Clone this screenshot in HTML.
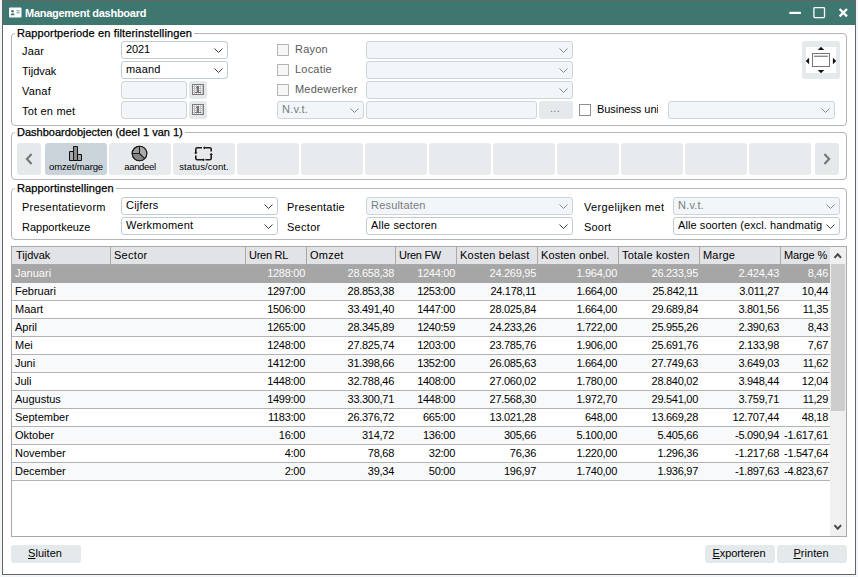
<!DOCTYPE html>
<html lang="nl"><head><meta charset="utf-8"><title>Management dashboard</title>
<style>
html,body{margin:0;padding:0}
body{width:858px;height:577px;overflow:hidden;background:#f2f6f8;position:relative;
 font-family:"Liberation Sans",Arial,sans-serif;font-size:11px;color:#000;letter-spacing:0.2px}
div,span{box-sizing:border-box}
#win{position:absolute;left:2px;top:0;width:854px;height:575px;border:1px solid #646464;background:#fff}
#tb{position:absolute;left:3px;top:1px;width:852px;height:24px;background:#3e7770}
#tt{position:absolute;left:25px;top:1px;height:24px;line-height:25px;color:#fff;font-weight:bold;font-size:11px;letter-spacing:-0.27px;white-space:nowrap}
.gb{position:absolute;border:1px solid #b4b4b4;border-radius:4px}
.gt{position:absolute;background:#fff;padding:0 2px 0 2px;white-space:nowrap;line-height:12px;height:12px;letter-spacing:0.14px;color:#000;-webkit-text-stroke:0.25px #000}
.lb{position:absolute;white-space:nowrap;line-height:16px;height:16px}
.lb.g{color:#5a5a5a}
.cb{position:absolute;border:1px solid #c2cbd2;border-radius:3px;background:#fff;white-space:nowrap;overflow:hidden}
.cb span{position:absolute;left:4px;right:17px;top:-1px;line-height:16px;height:17px;overflow:hidden}
.cb.dis{background:#f3f6f8;border-color:#cdd5db;color:#777c80}
.cb .chev{position:absolute;right:4px;top:6px}
.in{position:absolute;border:1px solid #cdd5db;border-radius:3px;background:#f3f6f8}
.bt{position:absolute;background:#e4e9ec;border-radius:3px;text-align:center;white-space:nowrap;padding-right:2px}
.ck{position:absolute;width:12px;height:12px;border:1px solid #8e8e8e;background:#fff}
.ck.dis{border-color:#b5b5b5;background:#f4f6f7}
.db{position:absolute;top:143px;width:62px;height:32px;background:#e7ebee;border-radius:3px}
.db.sel{background:#ccd4db}
.db i{position:absolute;left:0;top:18px;width:62px;text-align:center;font-style:normal;font-size:9.5px;line-height:11px;letter-spacing:-0.14px;color:#000}
.db svg{position:absolute}
#tbl{position:absolute;left:11px;top:246px;width:836px;height:291px;border:1px solid #a9a9a9;background:#fff;overflow:hidden}
#hd{position:absolute;left:0;top:0;width:818px;height:18px;background:#e2e3e7;border-bottom:1px solid #a9a9a9}
.hc{position:absolute;top:0;height:17px;line-height:17px;white-space:nowrap}
.vs{position:absolute;top:0;width:1px;height:17px;background:#a9a9a9}
.rw{position:absolute;left:0;width:818px;height:18px;border-bottom:1px solid #b3b3b3;background:#fff}
.rw.alt{background:#f8f9fa}
.rw.sel{background:#a6a6a6;border-bottom-color:#a6a6a6;color:#fbfbfb}
.rw span{position:absolute;top:0;height:17px;line-height:17px;white-space:nowrap}
.rw span.n{text-align:right;letter-spacing:-0.28px}
#sb{position:absolute;left:818px;top:0;width:16px;height:289px;background:#f0f0f0}
#th{position:absolute;left:1px;top:17px;width:14px;height:147px;background:#cdcdcd}
u{text-decoration:underline;text-underline-offset:1px}
</style></head><body>
<svg width="0" height="0" style="position:absolute"><defs><pattern id="dots" x="1" y="1" width="2" height="2" patternUnits="userSpaceOnUse"><rect width="2" height="2" fill="#c4c4c4"/><rect width="1" height="1" fill="#fff"/></pattern></defs></svg>
<div id="win"></div>
<div id="tb"></div>
<svg style="position:absolute;left:9px;top:7px" width="13" height="11" viewBox="0 0 13 11"><rect x="0" y="0.5" width="12.5" height="10" rx="1.2" fill="#fff"/><circle cx="3.6" cy="4.2" r="1.3" fill="#3e7770"/><path d="M1.6 8.2 Q1.6 6.2 3.6 6.2 Q5.6 6.2 5.6 8.2 Z" fill="#3e7770"/><rect x="7.4" y="3.3" width="3.4" height="1.1" fill="#7aa5a0"/><rect x="7.4" y="5.3" width="3.4" height="1.1" fill="#7aa5a0"/></svg>
<div id="tt">Management dashboard</div>
<svg style="position:absolute;left:786px;top:5px" width="66" height="16" viewBox="0 0 66 16"><rect x="3.3" y="6.8" width="11.6" height="2.2" fill="#fff"/><rect x="27.9" y="2.6" width="10.6" height="10" rx="0.8" fill="none" stroke="#fff" stroke-width="1.3"/><path d="M53.6 4 L61 11.4 M61 4 L53.6 11.4" stroke="#fff" stroke-width="2.3" fill="none"/></svg>
<div class="gb" style="left:11px;top:33px;width:836px;height:93px"></div>
<div class="gt" style="left:15px;top:27px">Rapportperiode en filterinstellingen</div>
<div class="lb" style="left:22px;top:43px">Jaar</div>
<div class="lb" style="left:22px;top:63px;letter-spacing:-0.02px">Tijdvak</div>
<div class="lb" style="left:22px;top:83px">Vanaf</div>
<div class="lb" style="left:22px;top:103px">Tot en met</div>
<div class="cb" style="left:121px;top:41px;width:107px;height:18px"><span style="letter-spacing:-0.15px">2021</span><svg class="chev" width="9" height="6" viewBox="0 0 9 6"><path d="M0.5 0.5 L4.5 4.5 L8.5 0.5" fill="none" stroke="#3c3c3c" stroke-width="1"/></svg></div>
<div class="cb" style="left:121px;top:61px;width:107px;height:18px"><span style="">maand</span><svg class="chev" width="9" height="6" viewBox="0 0 9 6"><path d="M0.5 0.5 L4.5 4.5 L8.5 0.5" fill="none" stroke="#3c3c3c" stroke-width="1"/></svg></div>
<div class="in" style="left:121px;top:81px;width:66px;height:18px"></div>
<div class="bt" style="left:189px;top:81px;width:18px;height:18px"><svg style="position:absolute;left:3px;top:3px" width="12" height="11" viewBox="0 0 12 11"><rect x="0.5" y="0.5" width="11" height="10" fill="url(#dots)" stroke="#7c7c7c"/><path d="M5 2 H7 V8 H9 V9 H3 V8 H5 V4 H4 V3 H5 Z" fill="#757575"/></svg></div>
<div class="in" style="left:121px;top:101px;width:66px;height:18px"></div>
<div class="bt" style="left:189px;top:101px;width:18px;height:18px"><svg style="position:absolute;left:3px;top:3px" width="12" height="11" viewBox="0 0 12 11"><rect x="0.5" y="0.5" width="11" height="10" fill="url(#dots)" stroke="#7c7c7c"/><path d="M5 2 H7 V8 H9 V9 H3 V8 H5 V4 H4 V3 H5 Z" fill="#757575"/></svg></div>
<div class="ck dis" style="left:277px;top:44px"></div>
<div class="lb g" style="left:295px;top:41px">Rayon</div>
<div class="cb dis" style="left:366px;top:41px;width:207px;height:18px"><span style=""></span><svg class="chev" width="9" height="6" viewBox="0 0 9 6"><path d="M0.5 0.5 L4.5 4.5 L8.5 0.5" fill="none" stroke="#858a8e" stroke-width="1"/></svg></div>
<div class="ck dis" style="left:277px;top:64px"></div>
<div class="lb g" style="left:295px;top:61px">Locatie</div>
<div class="cb dis" style="left:366px;top:61px;width:207px;height:18px"><span style=""></span><svg class="chev" width="9" height="6" viewBox="0 0 9 6"><path d="M0.5 0.5 L4.5 4.5 L8.5 0.5" fill="none" stroke="#858a8e" stroke-width="1"/></svg></div>
<div class="ck dis" style="left:277px;top:84px"></div>
<div class="lb g" style="left:295px;top:81px">Medewerker</div>
<div class="cb dis" style="left:366px;top:81px;width:207px;height:18px"><span style=""></span><svg class="chev" width="9" height="6" viewBox="0 0 9 6"><path d="M0.5 0.5 L4.5 4.5 L8.5 0.5" fill="none" stroke="#858a8e" stroke-width="1"/></svg></div>
<div class="cb dis" style="left:277px;top:101px;width:87px;height:18px"><span style="">N.v.t.</span><svg class="chev" width="9" height="6" viewBox="0 0 9 6"><path d="M0.5 0.5 L4.5 4.5 L8.5 0.5" fill="none" stroke="#858a8e" stroke-width="1"/></svg></div>
<div class="in" style="left:366px;top:101px;width:171px;height:18px"></div>
<div class="bt" style="left:539px;top:101px;width:34px;height:18px;line-height:15px;color:#777;letter-spacing:0.3px">...</div>
<div class="ck" style="left:579px;top:104px"></div>
<div class="lb" style="left:597px;top:101px;width:60.5px;overflow:hidden;letter-spacing:-0.04px">Business unit</div>
<div class="cb dis" style="left:668px;top:101px;width:167px;height:18px"><span style=""></span><svg class="chev" width="9" height="6" viewBox="0 0 9 6"><path d="M0.5 0.5 L4.5 4.5 L8.5 0.5" fill="none" stroke="#858a8e" stroke-width="1"/></svg></div>
<div class="bt" style="left:802px;top:41px;width:38px;height:38px"><svg style="position:absolute;left:4px;top:6px" width="30" height="26" viewBox="0 0 30 26"><rect width="30" height="26" fill="#fff"/><rect x="6.5" y="6.5" width="17" height="13" fill="#fff" stroke="#777"/><rect x="8" y="8.6" width="14" height="1.4" fill="#8c8c8c"/><path d="M11.7 3.1 L15 -0.2 L18.3 3.1 Z M11.7 22.9 L15 26.2 L18.3 22.9 Z M3.1 10.7 L-0.2 14 L3.1 17.3 Z M26.9 10.7 L30.2 14 L26.9 17.3 Z" fill="#111"/></svg></div>
<div class="gb" style="left:11px;top:132px;width:836px;height:48px"></div>
<div class="gt" style="left:15px;top:126px;letter-spacing:0">Dashboardobjecten (deel 1 van 1)</div>
<div class="bt" style="left:17px;top:143px;width:24px;height:32px"><svg style="position:absolute;left:8px;top:10px" width="8" height="12" viewBox="0 0 8 12"><path d="M6.6 1 L1.9 6 L6.6 11" fill="none" stroke="#777" stroke-width="2.1"/></svg></div>
<div class="bt" style="left:815px;top:143px;width:24px;height:32px"><svg style="position:absolute;left:8px;top:10px" width="8" height="12" viewBox="0 0 8 12"><path d="M1.4 1 L6.1 6 L1.4 11" fill="none" stroke="#777" stroke-width="2.1"/></svg></div>
<div class="db sel" style="left:45px"><svg style="left:24px;top:3px" width="13" height="15" viewBox="0 0 13 15"><path d="M0.5 5.5 H4.5 V14.5 H0.5 Z" fill="#a8a8a8" stroke="#111"/><path d="M4.5 0.5 H8.5 V14.5 H4.5 Z" fill="#8c8c8c" stroke="#111"/><path d="M8.5 8.5 H12.5 V14.5 H8.5 Z" fill="#a2a2a2" stroke="#111"/></svg><i style="letter-spacing:-0.14px">omzet/marge</i></div>
<div class="db" style="left:109px"><svg style="left:22px;top:2px" width="17" height="17" viewBox="0 0 17 17"><circle cx="8.5" cy="8.5" r="7.3" fill="#9a9a9a" stroke="#1c1c1c" stroke-width="1.1"/><path d="M8.5 8.5 L8.5 1.2 A7.3 7.3 0 0 1 13.7 13.7 Z" fill="#ababab"/><path d="M8.5 8.5 L13.7 13.7 A7.3 7.3 0 0 1 1.2 8.5 Z" fill="#858585"/><path d="M8.5 1.2 V8.5 H1.2 M8.5 8.5 L13.7 13.7" fill="none" stroke="#1c1c1c" stroke-width="1.1"/><circle cx="8.5" cy="8.5" r="7.3" fill="none" stroke="#1c1c1c" stroke-width="1.1"/></svg><i style="letter-spacing:-0.33px">aandeel</i></div>
<div class="db" style="left:173px"><svg style="left:21px;top:3px" width="20" height="16" viewBox="0 0 20 16"><g fill="none" stroke="#1c1c1c" stroke-width="1.6"><path d="M8 1.8 H3.3 Q1.8 1.8 1.8 3.3 V7.3"/><path d="M9.8 1.8 H15.7 Q17.2 1.8 17.2 3.3 V5.6"/><path d="M17.2 7.8 V12.3 Q17.2 13.8 15.7 13.8 H11.4"/><path d="M1.8 9.5 V12.3 Q1.8 13.8 3.3 13.8 H9.6"/></g><path d="M0 6.4 H3.6 L1.8 8.3 Z M11 0.2 V3.4 L9 1.8 Z M15.4 8.8 H19 L17.2 6.9 Z M9 12.2 V15.4 L10.9 13.8 Z" fill="#1c1c1c"/></svg><i style="letter-spacing:0.08px">status/cont.</i></div>
<div class="db" style="left:237px"></div>
<div class="db" style="left:301px"></div>
<div class="db" style="left:365px"></div>
<div class="db" style="left:429px"></div>
<div class="db" style="left:493px"></div>
<div class="db" style="left:557px"></div>
<div class="db" style="left:621px"></div>
<div class="db" style="left:685px"></div>
<div class="db" style="left:749px"></div>
<div class="gb" style="left:11px;top:188px;width:836px;height:52px"></div>
<div class="gt" style="left:15px;top:182px">Rapportinstellingen</div>
<div class="lb" style="left:22px;top:199px;letter-spacing:0.24px">Presentatievorm</div>
<div class="lb" style="left:22px;top:219px;letter-spacing:0.0px">Rapportkeuze</div>
<div class="cb" style="left:121px;top:197px;width:157px;height:18px"><span style="">Cijfers</span><svg class="chev" width="9" height="6" viewBox="0 0 9 6"><path d="M0.5 0.5 L4.5 4.5 L8.5 0.5" fill="none" stroke="#3c3c3c" stroke-width="1"/></svg></div>
<div class="cb" style="left:121px;top:217px;width:157px;height:18px"><span style="">Werkmoment</span><svg class="chev" width="9" height="6" viewBox="0 0 9 6"><path d="M0.5 0.5 L4.5 4.5 L8.5 0.5" fill="none" stroke="#3c3c3c" stroke-width="1"/></svg></div>
<div class="lb" style="left:287px;top:199px;letter-spacing:0.2px">Presentatie</div>
<div class="lb" style="left:287px;top:219px;letter-spacing:0.28px">Sector</div>
<div class="cb dis" style="left:366px;top:197px;width:207px;height:18px"><span style="">Resultaten</span><svg class="chev" width="9" height="6" viewBox="0 0 9 6"><path d="M0.5 0.5 L4.5 4.5 L8.5 0.5" fill="none" stroke="#858a8e" stroke-width="1"/></svg></div>
<div class="cb" style="left:366px;top:217px;width:207px;height:18px"><span style="">Alle sectoren</span><svg class="chev" width="9" height="6" viewBox="0 0 9 6"><path d="M0.5 0.5 L4.5 4.5 L8.5 0.5" fill="none" stroke="#3c3c3c" stroke-width="1"/></svg></div>
<div class="lb" style="left:584px;top:199px;letter-spacing:0.34px">Vergelijken met</div>
<div class="lb" style="left:584px;top:219px">Soort</div>
<div class="cb dis" style="left:673px;top:197px;width:167px;height:18px"><span style="">N.v.t.</span><svg class="chev" width="9" height="6" viewBox="0 0 9 6"><path d="M0.5 0.5 L4.5 4.5 L8.5 0.5" fill="none" stroke="#858a8e" stroke-width="1"/></svg></div>
<div class="cb" style="left:673px;top:217px;width:167px;height:18px"><span style="letter-spacing:0.08px">Alle soorten (excl. handmatig</span><svg class="chev" width="9" height="6" viewBox="0 0 9 6"><path d="M0.5 0.5 L4.5 4.5 L8.5 0.5" fill="none" stroke="#3c3c3c" stroke-width="1"/></svg></div>
<div id="tbl"><div id="hd">
<div class="hc" style="left:4px;letter-spacing:-0.02px">Tijdvak</div><div class="hc" style="left:102px;letter-spacing:0.28px">Sector</div><div class="hc" style="left:237px;letter-spacing:-0.28px">Uren RL</div><div class="hc" style="left:298px;letter-spacing:0.25px">Omzet</div><div class="hc" style="left:387px;letter-spacing:-0.3px">Uren FW</div><div class="hc" style="left:448px;letter-spacing:0.22px">Kosten belast</div><div class="hc" style="left:529px;letter-spacing:0.09px">Kosten onbel.</div><div class="hc" style="left:610px;letter-spacing:0.23px">Totale kosten</div><div class="hc" style="left:691px;letter-spacing:0.2px">Marge</div><div class="hc" style="left:772px;letter-spacing:-0.12px">Marge %</div><div class="vs" style="left:98px"></div><div class="vs" style="left:233px"></div><div class="vs" style="left:294px"></div><div class="vs" style="left:383px"></div><div class="vs" style="left:444px"></div><div class="vs" style="left:525px"></div><div class="vs" style="left:606px"></div><div class="vs" style="left:687px"></div><div class="vs" style="left:768px"></div></div>
<div class="rw sel" style="top:18px"><span style="left:3px;letter-spacing:0">Januari</span><span class="n" style="left:234px;width:59px">1288:00</span><span class="n" style="left:295px;width:87px">28.658,38</span><span class="n" style="left:384px;width:59px">1244:00</span><span class="n" style="left:445px;width:79px">24.269,95</span><span class="n" style="left:526px;width:79px">1.964,00</span><span class="n" style="left:607px;width:79px">26.233,95</span><span class="n" style="left:688px;width:79px">2.424,43</span><span class="n" style="left:769px;width:47px">8,46</span></div>
<div class="rw alt" style="top:36px"><span style="left:3px;letter-spacing:0">Februari</span><span class="n" style="left:234px;width:59px">1297:00</span><span class="n" style="left:295px;width:87px">28.853,38</span><span class="n" style="left:384px;width:59px">1253:00</span><span class="n" style="left:445px;width:79px">24.178,11</span><span class="n" style="left:526px;width:79px">1.664,00</span><span class="n" style="left:607px;width:79px">25.842,11</span><span class="n" style="left:688px;width:79px">3.011,27</span><span class="n" style="left:769px;width:47px">10,44</span></div>
<div class="rw" style="top:54px"><span style="left:3px;letter-spacing:0">Maart</span><span class="n" style="left:234px;width:59px">1506:00</span><span class="n" style="left:295px;width:87px">33.491,40</span><span class="n" style="left:384px;width:59px">1447:00</span><span class="n" style="left:445px;width:79px">28.025,84</span><span class="n" style="left:526px;width:79px">1.664,00</span><span class="n" style="left:607px;width:79px">29.689,84</span><span class="n" style="left:688px;width:79px">3.801,56</span><span class="n" style="left:769px;width:47px">11,35</span></div>
<div class="rw alt" style="top:72px"><span style="left:3px;letter-spacing:0">April</span><span class="n" style="left:234px;width:59px">1265:00</span><span class="n" style="left:295px;width:87px">28.345,89</span><span class="n" style="left:384px;width:59px">1240:59</span><span class="n" style="left:445px;width:79px">24.233,26</span><span class="n" style="left:526px;width:79px">1.722,00</span><span class="n" style="left:607px;width:79px">25.955,26</span><span class="n" style="left:688px;width:79px">2.390,63</span><span class="n" style="left:769px;width:47px">8,43</span></div>
<div class="rw" style="top:90px"><span style="left:3px;letter-spacing:0">Mei</span><span class="n" style="left:234px;width:59px">1248:00</span><span class="n" style="left:295px;width:87px">27.825,74</span><span class="n" style="left:384px;width:59px">1203:00</span><span class="n" style="left:445px;width:79px">23.785,76</span><span class="n" style="left:526px;width:79px">1.906,00</span><span class="n" style="left:607px;width:79px">25.691,76</span><span class="n" style="left:688px;width:79px">2.133,98</span><span class="n" style="left:769px;width:47px">7,67</span></div>
<div class="rw alt" style="top:108px"><span style="left:3px;letter-spacing:0">Juni</span><span class="n" style="left:234px;width:59px">1412:00</span><span class="n" style="left:295px;width:87px">31.398,66</span><span class="n" style="left:384px;width:59px">1352:00</span><span class="n" style="left:445px;width:79px">26.085,63</span><span class="n" style="left:526px;width:79px">1.664,00</span><span class="n" style="left:607px;width:79px">27.749,63</span><span class="n" style="left:688px;width:79px">3.649,03</span><span class="n" style="left:769px;width:47px">11,62</span></div>
<div class="rw" style="top:126px"><span style="left:3px;letter-spacing:0">Juli</span><span class="n" style="left:234px;width:59px">1448:00</span><span class="n" style="left:295px;width:87px">32.788,46</span><span class="n" style="left:384px;width:59px">1408:00</span><span class="n" style="left:445px;width:79px">27.060,02</span><span class="n" style="left:526px;width:79px">1.780,00</span><span class="n" style="left:607px;width:79px">28.840,02</span><span class="n" style="left:688px;width:79px">3.948,44</span><span class="n" style="left:769px;width:47px">12,04</span></div>
<div class="rw alt" style="top:144px"><span style="left:3px;letter-spacing:0">Augustus</span><span class="n" style="left:234px;width:59px">1499:00</span><span class="n" style="left:295px;width:87px">33.300,71</span><span class="n" style="left:384px;width:59px">1448:00</span><span class="n" style="left:445px;width:79px">27.568,30</span><span class="n" style="left:526px;width:79px">1.972,70</span><span class="n" style="left:607px;width:79px">29.541,00</span><span class="n" style="left:688px;width:79px">3.759,71</span><span class="n" style="left:769px;width:47px">11,29</span></div>
<div class="rw" style="top:162px"><span style="left:3px;letter-spacing:0">September</span><span class="n" style="left:234px;width:59px">1183:00</span><span class="n" style="left:295px;width:87px">26.376,72</span><span class="n" style="left:384px;width:59px">665:00</span><span class="n" style="left:445px;width:79px">13.021,28</span><span class="n" style="left:526px;width:79px">648,00</span><span class="n" style="left:607px;width:79px">13.669,28</span><span class="n" style="left:688px;width:79px">12.707,44</span><span class="n" style="left:769px;width:47px">48,18</span></div>
<div class="rw alt" style="top:180px"><span style="left:3px;letter-spacing:0">Oktober</span><span class="n" style="left:234px;width:59px">16:00</span><span class="n" style="left:295px;width:87px">314,72</span><span class="n" style="left:384px;width:59px">136:00</span><span class="n" style="left:445px;width:79px">305,66</span><span class="n" style="left:526px;width:79px">5.100,00</span><span class="n" style="left:607px;width:79px">5.405,66</span><span class="n" style="left:688px;width:79px">-5.090,94</span><span class="n" style="left:769px;width:47px">-1.617,61</span></div>
<div class="rw" style="top:198px"><span style="left:3px;letter-spacing:0">November</span><span class="n" style="left:234px;width:59px">4:00</span><span class="n" style="left:295px;width:87px">78,68</span><span class="n" style="left:384px;width:59px">32:00</span><span class="n" style="left:445px;width:79px">76,36</span><span class="n" style="left:526px;width:79px">1.220,00</span><span class="n" style="left:607px;width:79px">1.296,36</span><span class="n" style="left:688px;width:79px">-1.217,68</span><span class="n" style="left:769px;width:47px">-1.547,64</span></div>
<div class="rw alt" style="top:216px"><span style="left:3px;letter-spacing:0">December</span><span class="n" style="left:234px;width:59px">2:00</span><span class="n" style="left:295px;width:87px">39,34</span><span class="n" style="left:384px;width:59px">50:00</span><span class="n" style="left:445px;width:79px">196,97</span><span class="n" style="left:526px;width:79px">1.740,00</span><span class="n" style="left:607px;width:79px">1.936,97</span><span class="n" style="left:688px;width:79px">-1.897,63</span><span class="n" style="left:769px;width:47px">-4.823,67</span></div>
<div id="sb"><svg style="position:absolute;left:3px;top:5px" width="10" height="7" viewBox="0 0 10 7"><path d="M1.4 5.9 L4.75 2.3 L8.1 5.9" fill="none" stroke="#484848" stroke-width="2"/></svg><div id="th"></div><svg style="position:absolute;left:3px;top:277px" width="10" height="7" viewBox="0 0 10 7"><path d="M1.4 1.1 L4.75 4.7 L8.1 1.1" fill="none" stroke="#484848" stroke-width="2"/></svg></div>
</div>
<div class="bt" style="left:11px;top:545px;width:70px;height:18px;line-height:17px;letter-spacing:0.05px"><u>S</u>luiten</div>
<div class="bt" style="left:705px;top:545px;width:70px;height:18px;line-height:17px;letter-spacing:-0.1px"><u>E</u>xporteren</div>
<div class="bt" style="left:777px;top:545px;width:70px;height:18px;line-height:17px;letter-spacing:0.05px"><u>P</u>rinten</div>
</body></html>
